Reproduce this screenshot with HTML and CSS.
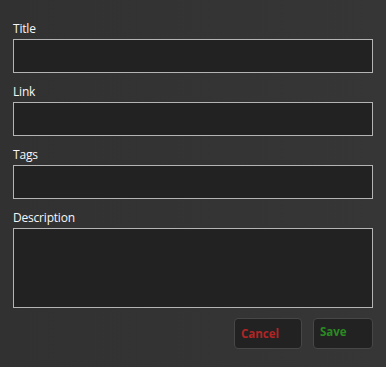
FILE: index.html
```html
<!DOCTYPE html>
<html lang="en">
<head>
    <meta charset="UTF-8">
    <title>Edit Bookmark</title>
    <link rel="stylesheet" href="styles.css">
</head>
<body>
    <form class="editor">
        <div class="field">
            <label for="title">Title</label>
            <input type="text" id="title">
        </div>
        <div class="field">
            <label for="link">Link</label>
            <input type="text" id="link">
        </div>
        <div class="field">
            <label for="tags">Tags</label>
            <input type="text" id="tags">
        </div>
        <div class="field">
            <label for="desc">Description</label>
            <textarea id="desc"></textarea>
        </div>
        <div class="actions">
            <button type="button" class="btn cancel">Cancel</button>
            <button type="button" class="btn save">Save</button>
        </div>
    </form>
</body>
</html>
```

FILE: styles.css
```css
* {
    margin: 0;
    padding: 0;
    box-sizing: border-box;
}

html, body {
    height: 100%;
}

body {
    background: linear-gradient(90deg, #313131, #363636);
    font-family: 'Open Sans', 'Noto Sans', sans-serif;
    color: #f7f7f7;
}

.editor {
    padding: 19px 13px 0 13px;
    display: flex;
    flex-direction: column;
}

.field {
    display: flex;
    flex-direction: column;
    margin-bottom: 9px;
}

.field label {
    font-size: 12px;
    line-height: 20px;
    height: 20px;
    letter-spacing: -0.2px;
}

.field input,
.field textarea {
    display: block;
    width: 100%;
    height: 34px;
    background: #222;
    border: 1px solid #b4b4b4;
    color: #eee;
    outline: none;
    resize: none;
}

.field textarea {
    height: 80px;
}

/* Buttons */
.actions {
    display: flex;
    justify-content: flex-end;
    gap: 11px;
    margin-top: 1px;
}

.btn {
    height: 31px;
    background: #222;
    border: 1px solid #474747;
    border-radius: 4px;
    font-family: 'Open Sans', sans-serif;
    font-weight: bold;
    font-size: 11.5px;
    text-align: left;
    cursor: pointer;
}

.cancel {
    width: 68px;
    color: #b32525;
    padding: 0 0 1px 6px;
}

.save {
    width: 60px;
    color: #2a8a22;
    padding: 0 0 5px 6px;
}
```
